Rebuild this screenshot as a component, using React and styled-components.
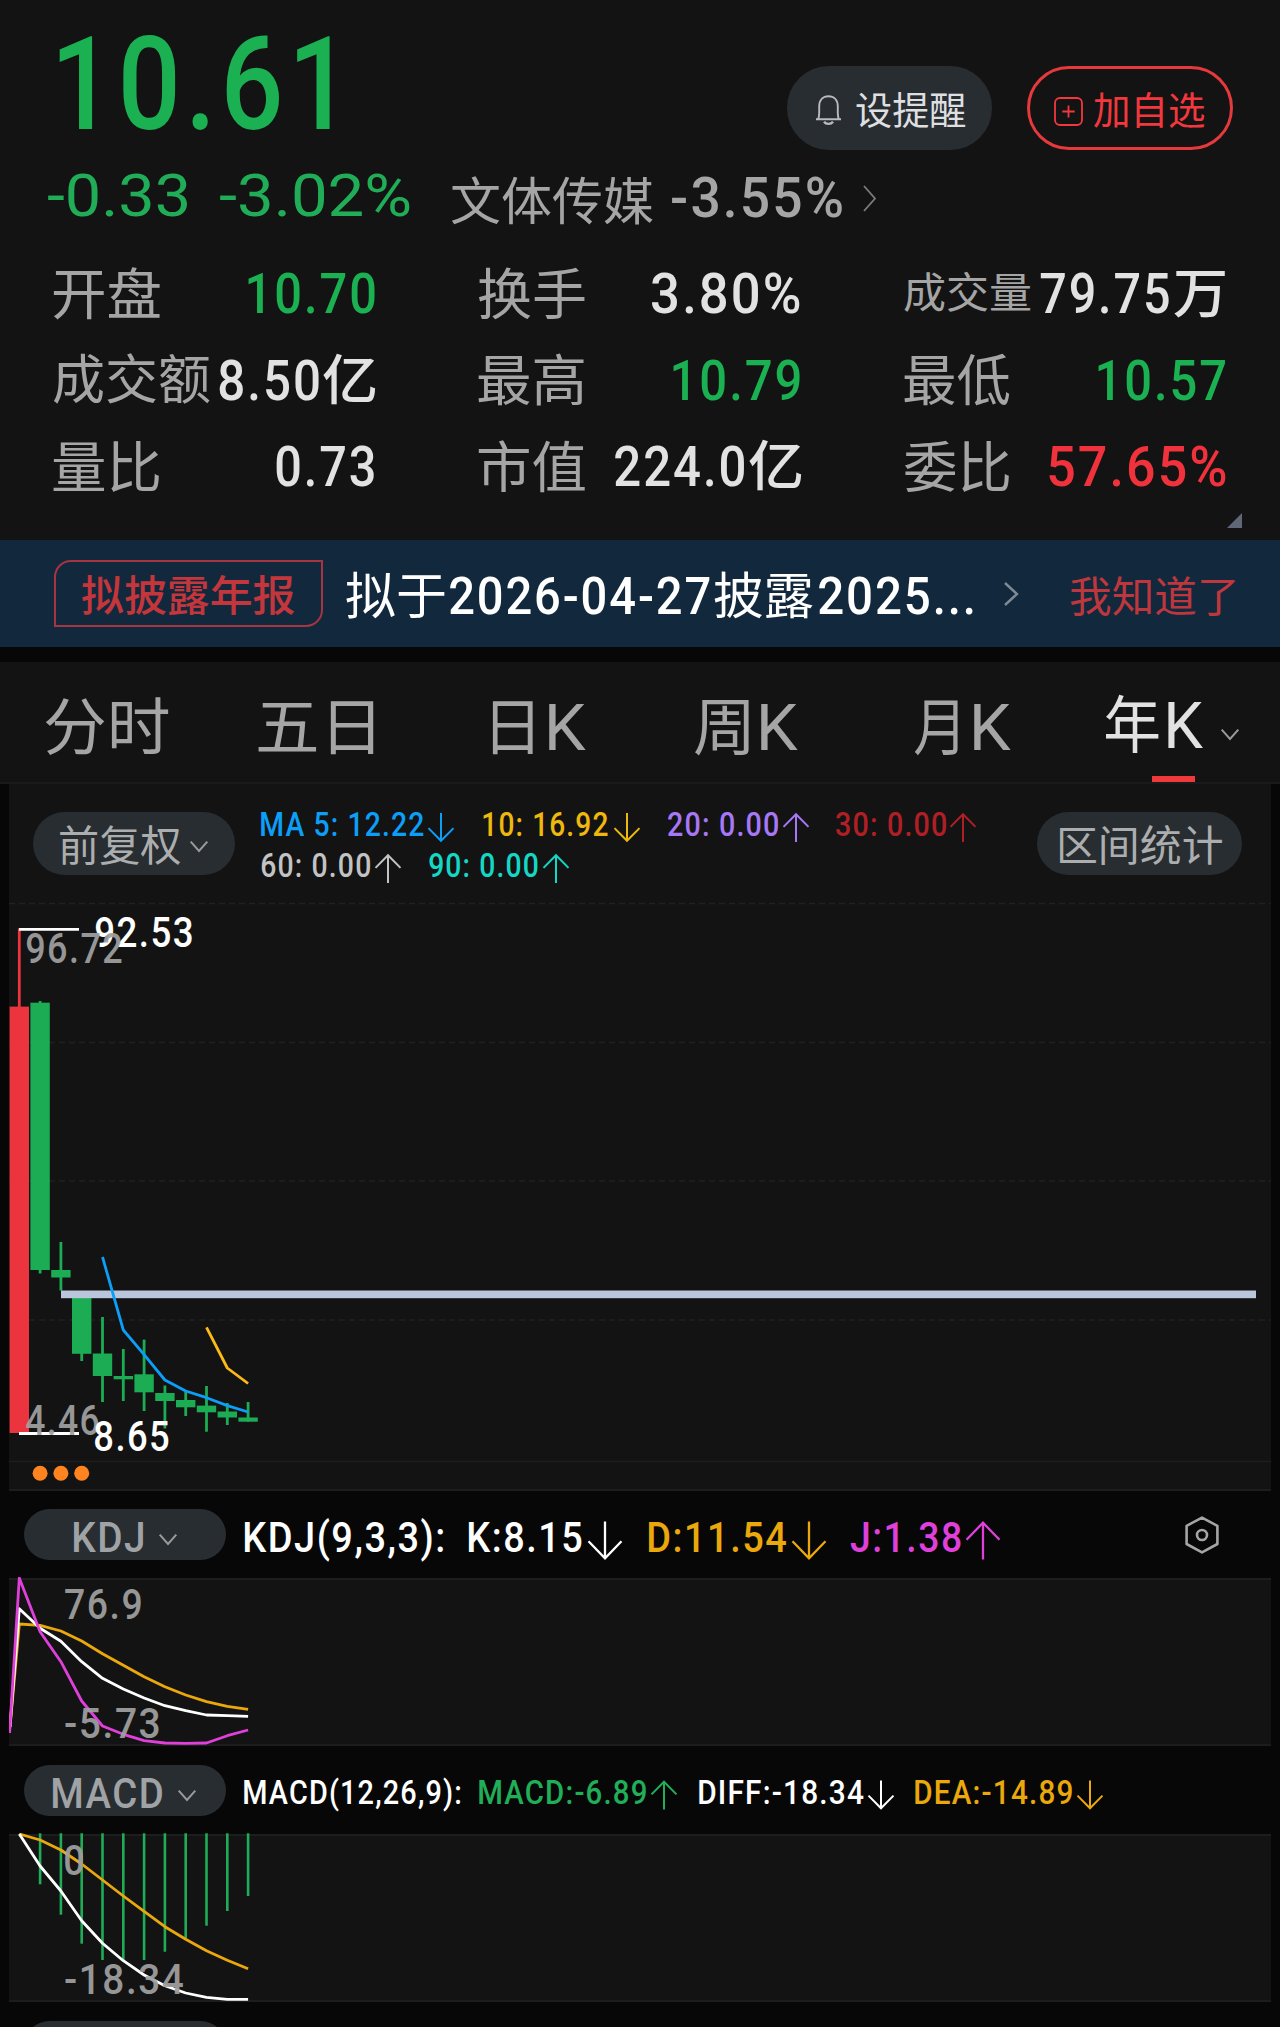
import React, { useLayoutEffect, useRef, useState } from "react";
import styled, { createGlobalStyle, css } from "styled-components";

const C = {
  bg: "#131313",
  gap: "#070707",
  green: "#1bb052",
  red: "#f0323d",
  candleRed: "#eb343d",
  label: "#a5a5a5",
  value: "#e2e2e2",
  white: "#ffffff",
  orange: "#eaa80c",
  magenta: "#df40da",
  pill: "#282d31",
  grid: "#1d1d1e",
};

const Global = createGlobalStyle`
  body { margin: 0; background: ${C.gap}; }
  * { box-sizing: border-box; }
`;

/* ---------- text fitted to a set ink width ---------- */

const Slot = styled.span`
  display: block;
  flex: none;
  width: ${(p) => p.$w}px;
  height: ${(p) => p.$size}px;
  margin-left: ${(p) => p.$ml || 0}px;
`;

const Glyphs = styled.span`
  display: inline-block;
  white-space: pre;
  transform-origin: 0 0;
  font-family: Roboto, "Noto Sans CJK SC", sans-serif;
  font-size: ${(p) => p.$size}px;
  line-height: ${(p) => p.$size}px;
  font-weight: ${(p) => p.$weight};
  letter-spacing: ${(p) => p.$ls}px;
  color: ${(p) => p.$color};
  opacity: ${(p) => p.$opacity || 1};
`;

const isCjk = (s) => /[\u4e00-\u9fff]/.test(s);

function Fit({ children, w, size, color, weight, ls, ml, dy = 0, opacity }) {
  const ref = useRef(null);
  const [fit, setFit] = useState({ k: 1, x: 0 });
  const cjk = isCjk(children);
  const wt = weight || (cjk ? 400 : 500);
  const spacing = (ls === undefined ? (cjk ? 0 : 0.04) : ls) * size;
  const shift = (cjk ? 0.035 : 0.0135) * size + dy;
  useLayoutEffect(() => {
    const cs = getComputedStyle(ref.current);
    const ctx = document.createElement("canvas").getContext("2d");
    ctx.font = `${cs.fontWeight} ${cs.fontSize} ${cs.fontFamily}`;
    const m = ctx.measureText(children);
    const ink = m.actualBoundingBoxLeft + m.actualBoundingBoxRight + spacing * (children.length - 1);
    const k = w / ink;
    setFit({ k, x: m.actualBoundingBoxLeft * k });
  }, [children, w, spacing]);
  return (
    <Slot $w={w} $size={size} $ml={ml}>
      <Glyphs
        ref={ref}
        $size={size}
        $weight={wt}
        $ls={spacing}
        $color={color}
        $opacity={opacity}
        style={{ transform: `translate(${fit.x}px, ${shift}px) scaleX(${fit.k})` }}
      >
        {children}
      </Glyphs>
    </Slot>
  );
}

/* ---------- icons ---------- */

const Icon = styled.svg`
  display: block;
  flex: none;
  margin-left: ${(p) => p.$ml || 0}px;
  transform: translateY(${(p) => p.$dy || 0}px);
  overflow: visible;
  fill: none;
  stroke: ${(p) => p.$color};
  stroke-width: ${(p) => p.$sw || 2};
`;

const ChevronDown = ({ ml, dy, color = "#9a9a9a" }) => (
  <Icon width="18" height="11" $ml={ml} $dy={dy} $color={color}>
    <path d="M0.7 0.7 L9 10 L17.3 0.7" />
  </Icon>
);

const ChevronRight = ({ ml, dy, w, h, color, sw }) => (
  <Icon width={w} height={h} $ml={ml} $dy={dy} $color={color} $sw={sw}>
    <path d={`M1 1 L${w - 1} ${h / 2} L1 ${h - 1}`} />
  </Icon>
);

const Arrow = ({ up, w = 26, h = 29, color, ml = 4, dy = 0, sw = 2 }) => {
  const c = w / 2;
  const d = up
    ? `M${c} ${h} V1 M0.5 ${h * 0.48} L${c} 1.2 L${w - 0.5} ${h * 0.48}`
    : `M${c} 0 V${h - 1} M0.5 ${h * 0.52} L${c} ${h - 1.2} L${w - 0.5} ${h * 0.52}`;
  return (
    <Icon width={w} height={h} $ml={ml} $dy={dy} $color={color} $sw={sw}>
      <path d={d} />
    </Icon>
  );
};

const Bell = () => (
  <Icon width="27" height="30" $ml={25} $dy={2} $color="#b9bbbc" $sw={1.9}>
    <path d="M1 24.3 H26 M3.2 24 C4.6 21 4.2 17 4.2 11.5 C4.2 5 8 1.2 13.5 1.2 C19 1.2 22.8 5 22.8 11.5 C22.8 17 22.4 21 23.8 24" />
    <path d="M9 26.8 C11 29.6 16 29.6 18 26.8" strokeWidth="2.4" />
  </Icon>
);

const PlusBox = () => (
  <Icon width="29" height="29" $ml={24} $dy={3} $color="#f2383d" $sw={1.8}>
    <rect x="1" y="1" width="27" height="27" rx="5" />
    <path d="M14.5 8.5 V20.5 M8.3 14.5 H20.7" />
  </Icon>
);

const Hexagon = () => (
  <Icon width="34" height="38" $ml={185} $dy={0} $color="#a5a5a5" $sw={2.6}>
    <path d="M17 1.6 L32.4 9.8 V28 L17 36.4 L1.6 28 V9.8 Z" strokeLinejoin="round" />
    <circle cx="17" cy="19" r="5" />
  </Icon>
);

/* ---------- quote header ---------- */

const Page = styled.main`
  width: 1280px;
  height: 2027px;
  overflow: hidden;
  background: ${C.gap};
`;

const Quote = styled.section`
  position: relative;
  height: 540px;
  background: ${C.bg};
`;

const TopRow = styled.div`
  display: flex;
  height: 150px;
  padding: 18px 47.5px 0 59px;
  justify-content: space-between;
`;

const Buttons = styled.div`
  display: flex;
  gap: 35px;
  padding-top: 48px;
`;

const RoundButton = styled.button`
  display: flex;
  align-items: center;
  width: 205.5px;
  height: 84px;
  padding: 0;
  border-radius: 42px;
  border: 3px solid ${(p) => (p.$outline ? "#e5393c" : C.pill)};
  background: ${(p) => (p.$outline ? "transparent" : C.pill)};
`;

const ChangeRow = styled.div`
  display: flex;
  align-items: center;
  height: 90px;
  padding-left: 48px;
`;

const Stats = styled.div`
  display: grid;
  grid-template-columns: repeat(3, 323.5px);
  column-gap: 102px;
  grid-auto-rows: 86.5px;
  padding: 10px 0 0 52.5px;
`;

const Stat = styled.div`
  display: flex;
  align-items: center;
  justify-content: space-between;
`;

const StatValue = styled.div`
  display: flex;
  align-items: center;
  padding-right: ${(p) => (p.$flush ? 0 : 2)}px;
`;

const Corner = styled.span`
  position: absolute;
  right: 38px;
  bottom: 12px;
  width: 15px;
  height: 15px;
  background: #606777;
  clip-path: polygon(100% 0, 100% 100%, 0 100%);
`;

const STATS = [
  { label: "开盘", lw: 107, value: "10.70", w: 126.5, color: C.green },
  { label: "换手", lw: 107, value: "3.80%", w: 147.5 },
  { label: "成交量", lw: 127, ls: 42, value: "79.75", w: 129, unit: "万", uw: 51 },
  { label: "成交额", lw: 157, ls: 53, value: "8.50", w: 99.5, unit: "亿", uw: 53 },
  { label: "最高", lw: 106, value: "10.79", w: 127, color: C.green },
  { label: "最低", lw: 106, value: "10.57", w: 127.5, color: C.green },
  { label: "量比", lw: 106, value: "0.73", w: 98 },
  { label: "市值", lw: 107, value: "224.0", w: 129, unit: "亿", uw: 53 },
  { label: "委比", lw: 105, value: "57.65%", w: 176.5, color: C.red },
];

function QuoteHeader() {
  return (
    <Quote>
      <TopRow>
        <Fit w={271} size={129} color={C.green}>10.61</Fit>
        <Buttons>
          <RoundButton>
            <Bell />
            <Fit w={110} size={37.5} color="#dedfe0" ml={14.5} dy={3}>设提醒</Fit>
          </RoundButton>
          <RoundButton $outline>
            <PlusBox />
            <Fit w={111} size={37.5} color="#f2383d" ml={11} dy={3}>加自选</Fit>
          </RoundButton>
        </Buttons>
      </TopRow>
      <ChangeRow>
        <Fit w={139} size={60} weight={400} ls={0} color="#21ad57">-0.33</Fit>
        <Fit w={190} size={60} weight={400} ls={0} color="#21ad57" ml={33}>-3.02%</Fit>
        <Fit w={202} size={51} color={C.label} ml={41} dy={5}>文体传媒</Fit>
        <Fit w={170} size={56} color={C.label} ml={19} dy={2.5}>-3.55%</Fit>
        <ChevronRight w={13} h={27} ml={21} dy={3} color="#7d7d7d" sw={1.8} />
      </ChangeRow>
      <Stats>
        {STATS.map((s) => (
          <Stat key={s.label}>
            <Fit w={s.lw} size={s.ls || 55} color={C.label}>{s.label}</Fit>
            <StatValue $flush={s.unit === "亿"}>
              <Fit w={s.w} size={56} color={s.color || C.value} dy={0.5}>{s.value}</Fit>
              {s.unit && <Fit w={s.uw} size={54} weight={500} color={C.value} ml={5} dy={0.5}>{s.unit}</Fit>}
            </StatValue>
          </Stat>
        ))}
      </Stats>
      <Corner />
    </Quote>
  );
}

/* ---------- notice ---------- */

const Notice = styled.section`
  display: flex;
  align-items: center;
  height: 107px;
  padding-left: 54px;
  background: #12283d;
`;

const Tag = styled.div`
  display: flex;
  align-items: center;
  justify-content: center;
  width: 269px;
  height: 67px;
  border: 2px solid #a43541;
  border-radius: 17px 0 17px 0;
`;

/* ---------- period tabs ---------- */

const Tabs = styled.nav`
  position: relative;
  display: flex;
  align-items: center;
  height: 122px;
  margin-top: 15px;
  padding: 9px 0 0 45px;
  background: ${C.bg};
  border-bottom: 2px solid #1a1a1b;
`;

const Tab = styled.div`
  display: flex;
  align-items: center;
  margin-left: ${(p) => p.$ml || 0}px;
`;

const Underline = styled.span`
  position: absolute;
  left: 1152px;
  bottom: 0;
  width: 43px;
  height: 6px;
  background: #ee3a3b;
`;

const TABS = [
  { cjk: "分时", w: 123.5, ml: -0.5 },
  { cjk: "五日", w: 115.5, ml: 89.5 },
  { cjk: "日", w: 41, ml: 118.5, k: 37, gap: 16 },
  { cjk: "周", w: 54, ml: 109.5, k: 37, gap: 12 },
  { cjk: "月", w: 43.5, ml: 115.5, k: 37, gap: 17 },
  { cjk: "年", w: 54, ml: 94, k: 35, gap: 8.5, active: true },
];

/* ---------- charts ---------- */

const Panel = styled.section`
  position: relative;
  width: 1262px;
  height: ${(p) => p.$h}px;
  margin-left: 9px;
  background: ${C.bg};
  ${(p) =>
    p.$lined &&
    css`
      border-top: 2px solid ${C.grid};
    `}
  border-bottom: 2px solid ${C.grid};
`;

const Toolbar = styled.div`
  display: flex;
  align-items: center;
  height: 118px;
  padding-left: 24px;
`;

const Pill = styled.div`
  display: flex;
  flex: none;
  align-items: center;
  justify-content: ${(p) => (p.$center ? "center" : "flex-start")};
  width: ${(p) => p.$w}px;
  height: ${(p) => p.$h}px;
  padding-left: ${(p) => p.$pl || 0}px;
  border-radius: ${(p) => p.$h / 2}px;
  background: ${C.pill};
`;

const Legend = styled.div`
  display: flex;
  flex-direction: column;
  width: 776px;
  margin-left: 26px;
  padding-top: 10px;
  gap: 12px;
`;

const LegendRow = styled.div`
  display: flex;
  align-items: center;
  height: 29px;
`;

const Drawing = styled.svg`
  position: absolute;
  left: 0;
  top: ${(p) => p.$top || 0}px;
  display: block;
  overflow: hidden;
`;

const Mark = styled.div`
  position: absolute;
  left: ${(p) => p.$x}px;
  top: ${(p) => p.$y}px;
`;

const IndicatorBar = styled.div`
  display: flex;
  align-items: center;
  height: ${(p) => p.$h}px;
  padding: ${(p) => p.$pt || 0}px 0 0 24px;
`;

const STEP = 20.8;
const cx = (i) => 19.3 + STEP * i;

const CANDLES = [
  [1006.6, 1433, 928.4, 1433],
  [1002.7, 1270, 1001, 1273.5],
  [1270, 1277.5, 1242, 1290.5],
  [1298, 1353.8, 1298, 1361],
  [1353.5, 1376, 1317, 1402],
  [1376, 1379.3, 1349, 1401],
  [1374.3, 1392.3, 1339.6, 1411],
  [1393, 1401, 1385.5, 1428.5],
  [1400, 1407.3, 1391.5, 1416],
  [1405.6, 1412.3, 1386, 1431.7],
  [1411.5, 1417.5, 1403, 1425],
  [1417.5, 1421.7, 1402, 1421.7],
];
const MA5 = [1257, 1330, 1354.6, 1380, 1391, 1397.7, 1405.6, 1412];
const MA10 = [1327.3, 1368, 1383.5];

const KDJ_J = [1578, 1631.7, 1661.7, 1701, 1726, 1734.3, 1740.7, 1743, 1743.3, 1743, 1735.7, 1730];
const KDJ_D = [1624, 1625.3, 1631, 1641, 1653.7, 1665.3, 1676.7, 1686.7, 1695, 1701.7, 1706.3, 1709.3];
const KDJ_K = [1608.7, 1628.3, 1641.3, 1661.7, 1678.3, 1689, 1698, 1705.7, 1710.7, 1715, 1715.7, 1716.3];

const MACD_BARS = [1884.3, 1914.7, 1943.7, 1960, 1961, 1960, 1951.7, 1938.5, 1925.7, 1911, 1896];
const DEA = [1834, 1840, 1850, 1864, 1880, 1896, 1911.3, 1926.7, 1939.3, 1950.7, 1960.3, 1968.7];
const DIFF = [1834, 1866, 1891, 1920.7, 1943.3, 1960.7, 1975, 1985.7, 1993, 1997.3, 1999.3, 1999.3];

const points = (ys, from = 0) => ys.map((y, i) => `${cx(i + from)},${y}`).join(" ");

const Line = ({ ys, from, start, color }) => (
  <polyline
    points={(start ? start + " " : "") + points(ys, from)}
    fill="none"
    stroke={color}
    strokeWidth="2.8"
    strokeLinejoin="round"
  />
);

const AxisLabel = ({ x, y, w, children, color = "#a0a0a0", opacity = 0.93 }) => (
  <Mark $x={x} $y={y}>
    <Fit w={w} size={42} color={color} opacity={opacity}>
      {children}
    </Fit>
  </Mark>
);

function CandleChart() {
  return (
    <Panel $h={707}>
      <Toolbar>
        <Pill $w={202} $h={63} $pl={27}>
          <Fit w={121} size={41.5} color="#acadae" dy={3}>前复权</Fit>
          <ChevronDown ml={9} dy={3} />
        </Pill>
        <Legend>
          <LegendRow>
            <Fit w={163} size={32.5} color="#0b9ff8" dy={-2}>MA 5: 12.22</Fit>
            <Arrow color="#0b9ff8" />
            <Fit w={125} size={32.5} color="#efb80c" ml={29} dy={-2}>10: 16.92</Fit>
            <Arrow color="#efb80c" ml={6} />
            <Fit w={110} size={32.5} color="#a678f5" ml={27.5} dy={-2}>20: 0.00</Fit>
            <Arrow up color="#a678f5" ml={5} />
            <Fit w={110} size={32.5} color="#b01f26" ml={27.5} dy={-2}>30: 0.00</Fit>
            <Arrow up color="#b01f26" />
          </LegendRow>
          <LegendRow>
            <Fit w={109} size={32.5} color="#c3c3c3" dy={-2}>60: 0.00</Fit>
            <Arrow up color="#c3c3c3" ml={5} />
            <Fit w={108.5} size={32.5} color="#14d8c5" ml={28} dy={-2}>90: 0.00</Fit>
            <Arrow up color="#14d8c5" ml={5} />
          </LegendRow>
        </Legend>
        <Pill $w={205} $h={63} $center>
          <Fit w={162} size={41.5} color="#acadae" ml={2} dy={3}>区间统计</Fit>
        </Pill>
      </Toolbar>
      <Drawing $top={118} width="1262" height="586" viewBox="9 902 1262 586">
        {[903.5, 1042.5, 1181, 1320].map((y) => (
          <path key={y} d={`M9 ${y} H1271`} stroke="#202021" strokeWidth="1.5" strokeDasharray="6 4" />
        ))}
        <path d="M9 1461.5 H1271" stroke={C.grid} strokeWidth="1.5" />
        {CANDLES.map(([top, bottom, high, low], i) => {
          const color = i === 0 ? C.candleRed : "#1bac54";
          return (
            <g key={i} fill={color}>
              <rect x={cx(i) - 1.4} y={high} width="2.8" height={low - high} />
              <rect x={cx(i) - 9.7} y={top} width="19.4" height={bottom - top} />
            </g>
          );
        })}
        <rect x="61" y="1290.5" width="1195" height="7.7" fill="#bac6db" />
        <Line ys={MA5} from={4} color="#0b9ff8" />
        <Line ys={MA10} from={9} color="#fbbb14" />
        <path d="M19 929.3 H79 M19 1433.5 H79" stroke="#fff" strokeWidth="2.8" />
        {[1, 2, 3].map((i) => (
          <circle key={i} cx={cx(i)} cy="1473.3" r="7.5" fill="#ff8420" />
        ))}
      </Drawing>
      <AxisLabel x={86} y={126.5} w={97} color={C.white} opacity={1}>92.53</AxisLabel>
      <AxisLabel x={17} y={142.5} w={96}>96.72</AxisLabel>
      <AxisLabel x={17} y={614.5} w={73}>4.46</AxisLabel>
      <AxisLabel x={86} y={630.5} w={74} color={C.white} opacity={1}>8.65</AxisLabel>
    </Panel>
  );
}

function KdjChart() {
  return (
    <>
      <IndicatorBar $h={87}>
        <Pill $w={202} $h={51} $pl={49.5}>
          <Fit w={69.5} size={42} color="#a0a3a5" dy={2.5}>KDJ</Fit>
          <ChevronDown ml={16} dy={5} />
        </Pill>
        <Fit w={198.5} size={42} color={C.white} ml={18.5} dy={2.5}>KDJ(9,3,3):</Fit>
        <Fit w={113} size={42} color={C.white} ml={25.5} dy={2.5}>K:8.15</Fit>
        <Arrow w={34} h={38} color={C.white} ml={6.5} dy={5.5} sw={2.3} />
        <Fit w={137} size={42} color={C.orange} ml={27} dy={2.5}>D:11.54</Fit>
        <Arrow w={34} h={38} color={C.orange} ml={5.5} dy={5.5} sw={2.3} />
        <Fit w={110.5} size={42} color={C.magenta} ml={24.5} dy={2.5}>J:1.38</Fit>
        <Arrow up w={34} h={38} color={C.magenta} ml={5.5} dy={5.5} sw={2.3} />
        <Hexagon />
      </IndicatorBar>
      <Panel $h={168} $lined>
        <Drawing $top={-3} width="1262" height="168" viewBox="9 1577 1262 168">
          <Line ys={KDJ_D} start="10,1727" color={C.orange} />
          <Line ys={KDJ_K} start="10,1727" color={C.white} />
          <Line ys={KDJ_J} start="9.6,1733" color={C.magenta} />
        </Drawing>
        <AxisLabel x={56} y={3} w={76}>76.9</AxisLabel>
        <AxisLabel x={56} y={122} w={94}>-5.73</AxisLabel>
      </Panel>
    </>
  );
}

function MacdChart() {
  return (
    <>
      <IndicatorBar $h={88} $pt={1}>
        <Pill $w={202} $h={51} $pl={29}>
          <Fit w={109.5} size={42} color="#a0a3a5" dy={2.5}>MACD</Fit>
          <ChevronDown ml={15.5} dy={5} />
        </Pill>
        <Fit w={216.5} size={32.5} color={C.white} ml={18} dy={2.5}>MACD(12,26,9):</Fit>
        <Fit w={167} size={32.5} color="#20ae58" ml={18} dy={2.5}>MACD:-6.89</Fit>
        <Arrow up color="#20ae58" ml={5} dy={4.5} />
        <Fit w={164.5} size={32.5} color={C.white} ml={22} dy={2.5}>DIFF:-18.34</Fit>
        <Arrow color={C.white} ml={4.5} dy={4.5} />
        <Fit w={157} size={32.5} color={C.orange} ml={21.5} dy={2.5}>DEA:-14.89</Fit>
        <Arrow color={C.orange} ml={4.7} dy={4.5} />
      </IndicatorBar>
      <Panel $h={168} $lined>
        <Drawing $top={-3} width="1262" height="169" viewBox="9 1833 1262 169">
          {MACD_BARS.map((y, i) => (
            <rect key={i} x={cx(i + 1) - 1.3} y="1833.3" width="2.6" height={y - 1833.3} fill="#20ac57" />
          ))}
          <Line ys={DEA} color={C.orange} />
          <Line ys={DIFF} color={C.white} />
        </Drawing>
        <AxisLabel x={56} y={3} w={18}>0</AxisLabel>
        <AxisLabel x={56} y={122} w={118}>-18.34</AxisLabel>
      </Panel>
    </>
  );
}

export default function App() {
  return (
    <Page>
      <Global />
      <QuoteHeader />
      <Notice>
        <Tag>
          <Fit w={213} size={42.5} weight={500} color="#c3363c" ml={-1} dy={2.5}>拟披露年报</Fit>
        </Tag>
        <Fit w={99} size={50} color={C.white} ml={23} dy={1.5}>拟于</Fit>
        <Fit w={260} size={51.5} color={C.white} ml={5} dy={2.5}>2026-04-27</Fit>
        <Fit w={99} size={50} color={C.white} ml={3.5} dy={1.5}>披露</Fit>
        <Fit w={154} size={51.5} color={C.white} ml={6.5} dy={2.5}>2025...</Fit>
        <ChevronRight w={14} h={24} ml={30.5} color="#7e8a94" sw={2.4} />
        <Fit w={165.5} size={42} color="#bd373d" ml={52} dy={2.5}>我知道了</Fit>
      </Notice>
      <Tabs>
        {TABS.map((t) => {
          const color = t.active ? C.value : C.label;
          const dy = t.active ? -2 : 0;
          return (
            <Tab key={t.cjk} $ml={t.ml}>
              <Fit w={t.w} size={62} color={color} dy={dy}>{t.cjk}</Fit>
              {t.k && <Fit w={t.k} size={65} color={color} weight={400} ml={t.gap} dy={dy + 1}>K</Fit>}
              {t.active && <ChevronDown ml={18} dy={8} />}
            </Tab>
          );
        })}
        <Underline />
      </Tabs>
      <CandleChart />
      <KdjChart />
      <MacdChart />
      <IndicatorBar $h={51} $pt={37}>
        <Pill $w={202} $h={51} />
      </IndicatorBar>
    </Page>
  );
}
